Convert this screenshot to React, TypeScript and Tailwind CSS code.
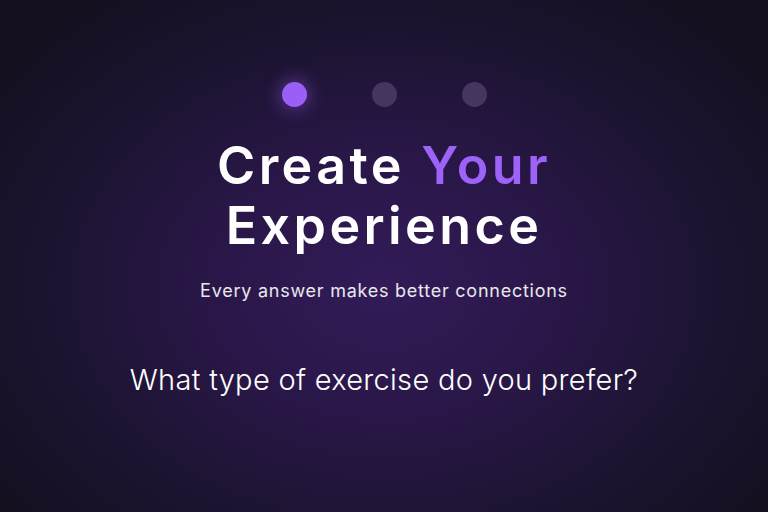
const steps = [true, false, false];

export default function App() {
  return (
    <main
      className="relative flex h-[512px] w-full flex-col items-center overflow-hidden text-white"
      style={{
        fontFamily: 'Inter, "Noto Sans", sans-serif',
        background: 'radial-gradient(ellipse 62% 70% at 50% 56%, #321b58 0%, #2a1749 35%, #1e1434 65%, #141020 100%)',
      }}
    >
      {/* Progress dots */}
      <div className="mt-[82px] flex items-center gap-[65px]">
        {steps.map((active, i) =>
          active ? (
            <span key={i} className="size-[25px] rounded-full bg-[#9b5ff8] shadow-[0_0_16px_4px_rgba(155,95,248,0.35)]" />
          ) : (
            <span key={i} className="size-[25px] rounded-full bg-[#46365f]" />
          )
        )}
      </div>

      <h1 className="mt-[29px] text-center text-[52px] font-semibold leading-[60px] tracking-[3.4px]">
        Create <span className="text-[#9d62f7]">Your</span>
        <br />
        Experience
      </h1>

      <p className="mt-[21px] text-[18px] leading-[28px] tracking-[0.75px] text-white/90">Every answer makes better connections</p>

      <h2 className="mt-[57px] text-[29px] font-light leading-[36px] tracking-[0.3px]">What type of exercise do you prefer?</h2>
    </main>
  );
}
